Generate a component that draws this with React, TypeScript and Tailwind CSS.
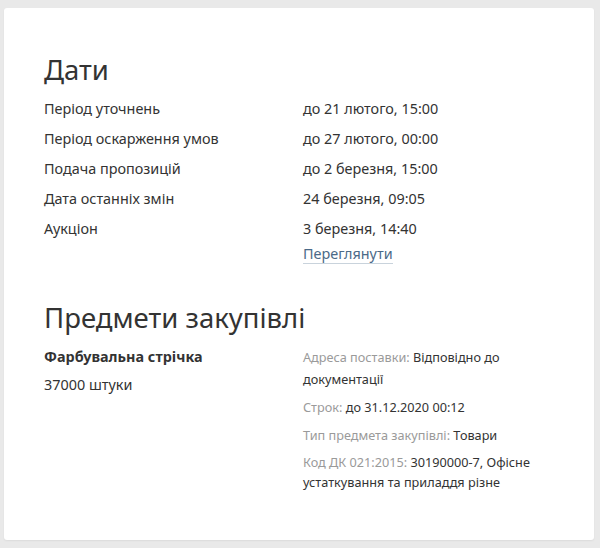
import React from 'react';

const dates = [
  { label: 'Період уточнень', value: 'до 21 лютого, 15:00' },
  { label: 'Період оскарження умов', value: 'до 27 лютого, 00:00' },
  { label: 'Подача пропозицій', value: 'до 2 березня, 15:00' },
  { label: 'Дата останніх змін', value: '24 березня, 09:05' },
  { label: 'Аукціон', value: '3 березня, 14:40' },
];

const App: React.FC = () => {
  return (
    <div className="min-h-[548px] bg-[#e9e9e9] pt-[8px] pb-[8px] pl-[4px] pr-[6px] font-['Noto_Sans',sans-serif] text-[#333]">
      <div className="bg-white rounded-[3px] shadow-[0_1px_2px_rgba(0,0,0,0.06)] pl-[40px] pr-[30px] pt-[42px] h-[532px]">
        <h2 className="text-[27.5px] leading-[40px] font-normal text-[#333] mb-[4px]">Дати</h2>
        <div className="flex flex-col">
          {dates.map((d) => (
            <div key={d.label} className="grid grid-cols-[259px_1fr] text-[14.4px] leading-[30px]">
              <span>{d.label}</span>
              <span>{d.value}</span>
            </div>
          ))}
          <div className="grid grid-cols-[259px_1fr] text-[14.4px] leading-[20px]">
            <span></span>
            <span>
              <a href="#" className="text-[#4b6a88] border-b border-[#c9d3dc]">Переглянути</a>
            </span>
          </div>
        </div>

        <h2 className="text-[27.5px] leading-[40px] font-normal text-[#333] mt-[34px] mb-[8px]">Предмети закупівлі</h2>
        <div className="grid grid-cols-[259px_1fr] text-[14.4px]">
          <div className="flex flex-col">
            <span className="font-bold leading-[22px]">Фарбувальна стрічка</span>
            <span className="leading-[22px] mt-[6px]">37000 штуки</span>
          </div>
          <div className="flex flex-col gap-[6px] text-[12.7px] leading-[22px]">
            <p>
              <span className="text-[#9a9a9a]">Адреса поставки: </span>
              <span>Відповідно до документації</span>
            </p>
            <p>
              <span className="text-[#9a9a9a]">Строк: </span>
              <span>до 31.12.2020 00:12</span>
            </p>
            <p>
              <span className="text-[#9a9a9a]">Тип предмета закупівлі: </span>
              <span>Товари</span>
            </p>
            <p className="leading-[20px]">
              <span className="text-[#9a9a9a]">Код ДК 021:2015: </span>
              <span>30190000-7, Офісне устаткування та приладдя різне</span>
            </p>
          </div>
        </div>
      </div>
    </div>
  );
};

export default App;
